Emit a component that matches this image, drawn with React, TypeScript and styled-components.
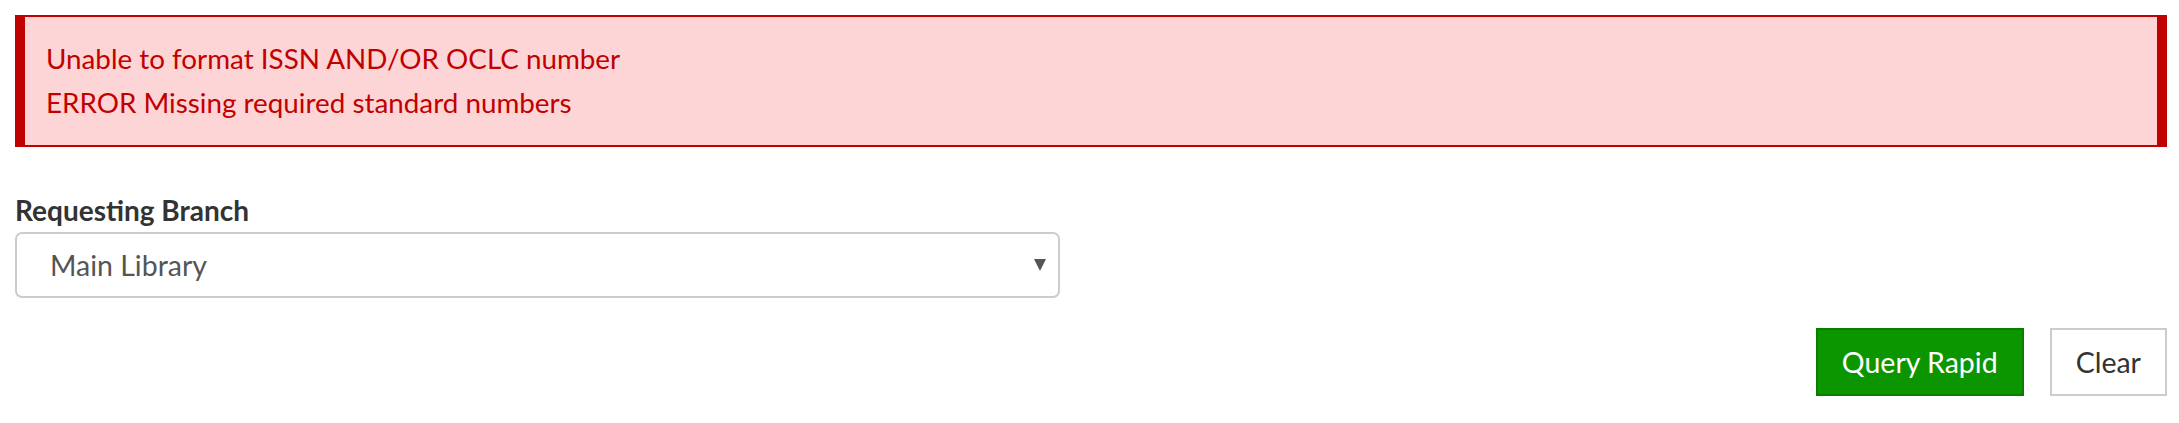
import React from "react";
import styled, { createGlobalStyle } from "styled-components";

const Global = createGlobalStyle`
  html, body { margin: 0; padding: 0; background: #ffffff; }
  body { font-family: Lato, "Open Sans", "Liberation Sans", sans-serif; }
  * { box-sizing: border-box; }
`;

const Page = styled.div`
  padding: 15px 12px 0 15px;
  display: flex;
  flex-direction: column;
`;

const Alert = styled.div`
  background: #fdd5d6;
  border-style: solid;
  border-color: #c10000;
  border-width: 2px 10px;
  padding: 20px 21px;
  color: #c10000;
  font-size: 27.8px;
  line-height: 44px;
`;

const Field = styled.div`
  margin-top: 46px;
  width: 1045px;
  display: flex;
  flex-direction: column;
  gap: 4px;
`;

const Label = styled.label`
  font-weight: 700;
  font-size: 28px;
  line-height: 35px;
  color: #333333;
`;

const SelectBox = styled.div`
  height: 66px;
  border: 2px solid #cccccc;
  border-radius: 7px;
  display: flex;
  align-items: center;
  padding: 0 12px 0 33px;
  background: #ffffff;
`;

const NativeSelect = styled.select`
  flex: 1;
  appearance: none;
  -webkit-appearance: none;
  border: none;
  outline: none;
  background: transparent;
  font-family: inherit;
  font-size: 28.5px;
  color: #555555;
  padding: 0;
  margin: 0;
`;

const Arrow = styled.span`
  width: 0;
  height: 0;
  border-left: 6px solid transparent;
  border-right: 6px solid transparent;
  border-top: 12px solid #555555;
`;

const Actions = styled.div`
  margin-top: 30px;
  display: flex;
  justify-content: flex-end;
  gap: 26px;
`;

const Button = styled.button<{ $primary?: boolean }>`
  height: 68px;
  padding: 0 24px;
  font-family: inherit;
  font-size: 28.5px;
  border: 2px solid ${(p) => (p.$primary ? "#0a7c00" : "#cccccc")};
  background: ${(p) => (p.$primary ? "#0b9600" : "#ffffff")};
  color: ${(p) => (p.$primary ? "#ffffff" : "#333333")};
  border-radius: 0;
  cursor: pointer;
`;

export default function App() {
  return (
    <>
      <Global />
      <Page>
        <Alert>
          <div>Unable to format ISSN AND/OR OCLC number</div>
          <div>ERROR Missing required standard numbers</div>
        </Alert>
        <Field>
          <Label htmlFor="branch">Requesting Branch</Label>
          <SelectBox>
            <NativeSelect id="branch" defaultValue="main">
              <option value="main">Main Library</option>
            </NativeSelect>
            <Arrow />
          </SelectBox>
        </Field>
        <Actions>
          <Button $primary>Query Rapid</Button>
          <Button>Clear</Button>
        </Actions>
      </Page>
    </>
  );
}
